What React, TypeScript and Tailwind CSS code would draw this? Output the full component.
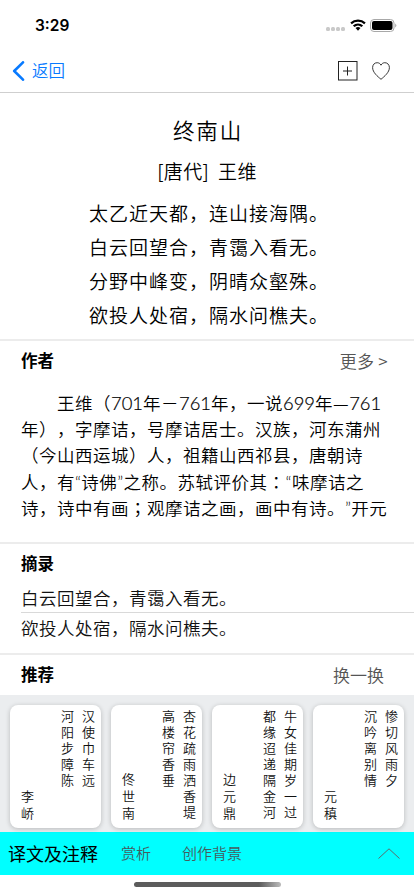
import type { ReactNode } from "react";

interface Recommendation {
  first: string;
  second: string;
  author: string;
}

const POEM_LINES = [
  "太乙近天都，连山接海隅。",
  "白云回望合，青霭入看无。",
  "分野中峰变，阴晴众壑殊。",
  "欲投人处宿，隔水问樵夫。",
];

const RECOMMENDATIONS: Recommendation[] = [
  { first: "汉使巾车远", second: "河阳步障陈", author: "李峤" },
  { first: "杏花疏雨洒香堤", second: "高楼帘香垂", author: "佟世南" },
  { first: "牛女佳期岁一过", second: "都缘迢递隔金河", author: "边元鼎" },
  { first: "惨切风雨夕", second: "沉吟离别情", author: "元稹" },
];

const Num = ({ children }: { children: ReactNode }) => (
  <span className="font-['Lato'] text-[18.4px] font-light tracking-normal [-webkit-text-stroke:0.2px_black]">
    {children}
  </span>
);

const Quote = ({ children }: { children: ReactNode }) => (
  <span className="inline-block w-[6.3px] font-['Lato']">{children}</span>
);

// Pontuação centralizada no quadro do caractere
const Mid = ({ children }: { children: ReactNode }) => (
  <span className="font-['Noto_Sans_CJK_TC']">{children}</span>
);

const StatusBar = () => (
  <div className="flex h-[50px] items-center justify-between pr-[17px] pl-[35px]">
    <span className="mt-px font-['Inter'] text-[15.5px] font-semibold text-black">3:29</span>
    <div className="flex items-center">
      <div className="mt-[8px] mr-[5px] flex gap-[1px]">
        {[0, 1, 2, 3].map((dot) => (
          <i key={dot} className="h-[4px] w-[4px] rounded-[1.5px] bg-[#c9c9c9]" />
        ))}
      </div>
      <svg width="16" height="12" viewBox="0 0 16 12" className="mr-[4px]">
        <path d="M.3 3.600a11.200 11.200 0 0 1 15.400 0l-1.500 1.700a9 9 0 0 0-12.400 0Z" />
        <path d="M2.900 6.500a7.300 7.300 0 0 1 10.200 0l-1.600 1.600a5.200 5.200 0 0 0-7 0Z" />
        <path d="M5.500 9.100a3.600 3.600 0 0 1 5 0L8 11.700Z" />
      </svg>
      <svg width="27" height="13" viewBox="0 0 27 13" fill="none">
        <rect x=".5" y=".5" width="23.5" height="12" rx="3.5" stroke="#a8a8a8" />
        <rect x="2" y="2" width="20.5" height="9" rx="2" fill="#000" />
        <path d="M25.3 4.5q2 2 0 4Z" fill="#999" />
      </svg>
    </div>
  </div>
);

const NavBar = () => (
  <div className="flex h-[43px] items-center justify-between border-b border-[#cfcfcf] pr-[24px] pb-px pl-[12px]">
    <button type="button" className="flex items-center gap-[7px] text-[#087aff]">
      <svg width="13" height="20" viewBox="0 0 13 20" fill="none" stroke="currentColor" strokeWidth="2.6">
        <path d="m11 1.300-8.800 8.700 8.800 8.700" strokeLinecap="round" strokeLinejoin="round" />
      </svg>
      <span className="-mt-px text-[16.5px] leading-5">返回</span>
    </button>
    <div className="flex items-center gap-[14px] text-[#222]">
      <svg width="20" height="20" viewBox="0 0 20 20" fill="none" stroke="currentColor">
        <rect x=".5" y=".5" width="18.5" height="18.5" />
        <path d="M9.500 5.500v9M5 10h9" />
      </svg>
      <svg width="18" height="18" viewBox="0 0 18 18" fill="none" stroke="currentColor" strokeWidth=".9">
        <path d="M9 3.200C8 1.300 6.800.8 5.200.7 2.500.7.6 2.700.6 5.600c0 4.700 5 8.900 8.400 11.700 3.400-2.800 8.400-7 8.400-11.700 0-2.900-1.900-4.900-4.600-4.900C11.200.8 10 1.300 9 3.200Z" />
      </svg>
    </div>
  </div>
);

const SectionHeader = ({ title, action }: { title: string; action?: ReactNode }) => (
  <div className="flex h-[40px] items-center justify-between pr-[26px] pb-px pl-[21px]">
    <h2 className="text-[16.5px] font-bold text-black">{title}</h2>
    {action && <button type="button" className="text-[17px] text-[#555]">{action}</button>}
  </div>
);

const PoemCard = ({ item }: { item: Recommendation }) => (
  <article className="flex h-[123px] w-[91px] shrink-0 justify-between rounded-[8px] bg-white pt-[5px] pr-[5px] pb-[5px] pl-[9px] text-[13px] leading-[16px] tracking-[3px] text-[#111] shadow-[0_1px_5px_rgba(0,0,0,0.22)]">
    <p className="self-end tracking-[3.6px] [writing-mode:vertical-rl]">{item.author}</p>
    <div className="flex gap-[5px]">
      <p className="[writing-mode:vertical-rl]">{item.second}</p>
      <p className="[writing-mode:vertical-rl]">{item.first}</p>
    </div>
  </article>
);

export default function App() {
  return (
    <main className="h-[896px] w-[414px] overflow-hidden bg-white font-['Noto_Sans_CJK_SC',sans-serif] font-[350] [text-spacing-trim:space-all]">
      <StatusBar />
      <NavBar />

      <section className="h-[246px] pt-[19px] text-center text-black">
        <h1 className="h-[36px] pl-[2px] text-[21.5px] leading-[36px] tracking-[1.8px]">终南山</h1>
        <p className="mt-[7px] h-[32px] text-[19px] leading-[32px] tracking-[.3px]">[唐代]&nbsp; 王维</p>
        <div className="mt-[9px] pl-[4px] text-[19px] leading-[34px] tracking-[1px]">
          {POEM_LINES.map((line) => (
            <p key={line} className="h-[34px]">{line}</p>
          ))}
        </div>
      </section>

      <section className="h-[203px] border-t-2 border-[#ececec]">
        <SectionHeader title="作者" action={<span className="tracking-[.3px]">更多 &gt;</span>} />
        <div className="mt-[9px] pl-[21px] text-[17.5px] leading-[26.2px] tracking-[.5px] whitespace-nowrap text-black *:h-[26.2px]">
          <p className="pl-[36px]">
            王维（<Num>701</Num>年－<Num>761</Num>年，一说<Num>699</Num>年—<Num>761</Num>
          </p>
          <p>年），字摩诘，号摩诘居士。汉族，河东蒲州</p>
          <p>（今山西运城）人，祖籍山西祁县，唐朝诗</p>
          <p>
            人，有<Quote>“</Quote>诗佛<Quote>”</Quote>之称。苏轼评价其<Mid>：</Mid><Quote>“</Quote>味摩诘之
          </p>
          <p>
            诗，诗中有画<Mid>；</Mid>观摩诘之画，画中有诗。<Quote>”</Quote>开元
          </p>
        </div>
      </section>

      <section className="h-[111px] border-t-2 border-[#ececec]">
        <SectionHeader title="摘录" />
        <ul className="pl-[21px] text-[17.5px] tracking-[.5px] text-[#111]">
          <li className="h-[29px] border-b border-[#d9d9d9] leading-[27px]">{POEM_LINES[1]}</li>
          <li className="h-[30px] leading-[30px]">{POEM_LINES[3]}</li>
        </ul>
      </section>

      <section className="h-[179px] border-t-2 border-[#ececec]">
        <SectionHeader title="推荐" action={<span className="mr-[4px]">换一换</span>} />
        <div className="flex h-[137px] gap-[10px] bg-[#ebedef] pt-[10px] pl-[10px]">
          {RECOMMENDATIONS.map((item) => (
            <PoemCard key={item.author} item={item} />
          ))}
        </div>
      </section>

      <nav className="flex h-[43px] items-center bg-[#00ffff] pr-[14px] pl-[8px] text-[15px] text-[#455c5e]">
        <button type="button" className="text-[18px] font-normal text-black">译文及注释</button>
        <button type="button" className="ml-[23px]">赏析</button>
        <button type="button" className="ml-[31px]">创作背景</button>
        <svg className="ml-auto" width="22" height="11" viewBox="0 0 22 11" fill="none" stroke="#5b6b6c">
          <path d="M.5 10.500 11 .8l10.500 9.700" />
        </svg>
      </nav>
      <div className="mx-auto mt-[7px] h-[5px] w-[147px] rounded-full bg-linear-to-r from-[#5c5c5c] from-85% to-[#bcbcbc]" />
    </main>
  );
}
